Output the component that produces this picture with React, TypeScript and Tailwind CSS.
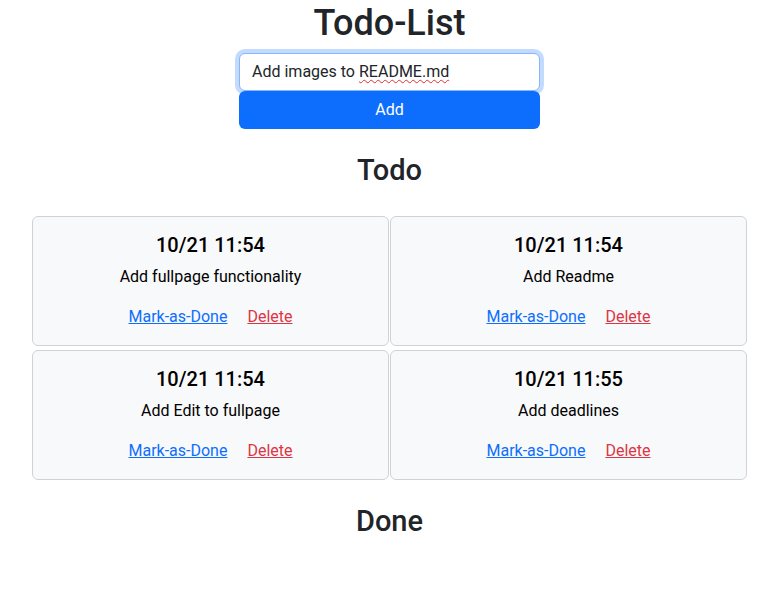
import React from "react";

const todos = [
  { date: "10/21 11:54", text: "Add fullpage functionality" },
  { date: "10/21 11:54", text: "Add Readme" },
  { date: "10/21 11:54", text: "Add Edit to fullpage" },
  { date: "10/21 11:55", text: "Add deadlines" },
];

export default function App() {
  return (
    <div
      className="min-h-[611px] bg-white text-[#212529]"
      style={{ fontFamily: "Roboto, 'Liberation Sans', sans-serif" }}
    >
      <div className="ml-[32px] w-[715px] flex flex-col items-center pt-[2px]">
        <h1 className="text-[36px] leading-[1.2] font-medium mb-[8px]">Todo-List</h1>
        <div className="relative w-[301px] h-[38px] rounded-md border border-[#86b7fe] shadow-[0_0_0_4px_rgba(13,110,253,0.25)] bg-white flex items-center px-[12px] text-[16px]">
          Add images to <span className="underline decoration-wavy decoration-[#e03030] decoration-1 underline-offset-2 ml-[4px]">README.md</span>
        </div>
        <button className="relative w-[301px] h-[38px] rounded-md bg-[#0d6efd] text-white text-[16px]">Add</button>
        <h2 className="text-[29px] leading-[1.2] font-medium mt-[24px]">Todo</h2>
        <div className="w-full grid grid-cols-2 gap-x-[1px] gap-y-[4px] mt-[28px]">
          {todos.map((t, i) => (
            <div
              key={i}
              className="rounded-md border border-[#d0d3d6] bg-[#f8f9fa] flex flex-col items-center p-4 text-black"
            >
              <div className="text-[20px] leading-[1.2] font-medium mb-2">{t.date}</div>
              <div className="text-[16px] leading-[1.5] mb-4">{t.text}</div>
              <div className="flex gap-[20px] text-[16px] leading-[1.5]">
                <a href="#" className="underline text-[#0d6efd]">Mark-as-Done</a>
                <a href="#" className="underline text-[#dc3545]">Delete</a>
              </div>
            </div>
          ))}
        </div>
        <h2 className="text-[29px] leading-[1.2] font-medium mt-[24px]">Done</h2>
      </div>
    </div>
  );
}
